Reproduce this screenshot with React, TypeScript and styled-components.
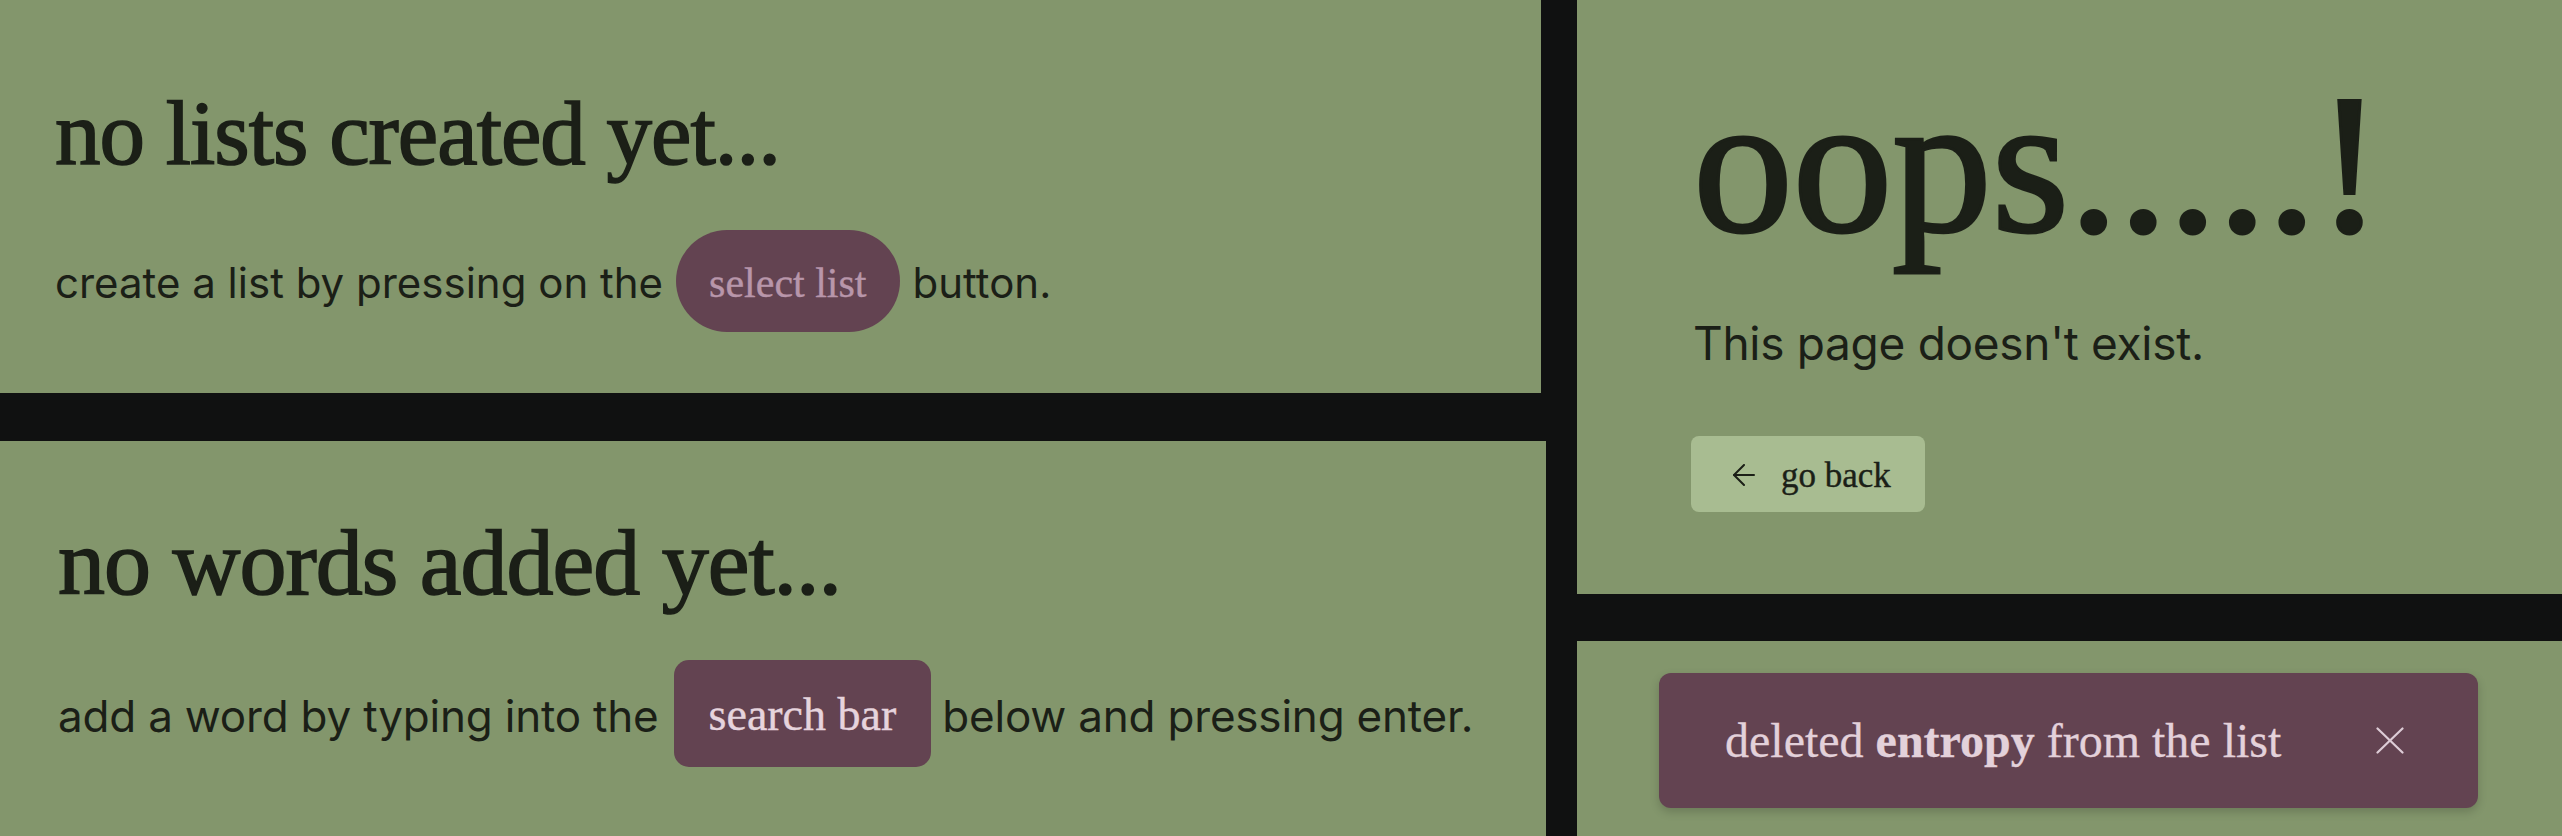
import React from "react";
import styled, { createGlobalStyle } from "styled-components";

const serif = `"Liberation Serif", "DejaVu Serif", serif`;
const sans = `"Inter", "Noto Sans", "Liberation Sans", sans-serif`;

const GlobalStyle = createGlobalStyle`
  html, body {
    margin: 0;
    padding: 0;
    background: #101111;
  }
  #root {
    width: 2562px;
    height: 836px;
    overflow: hidden;
  }
`;

const Board = styled.div`
  display: flex;
  width: 2562px;
  height: 836px;
  background: #101111;
  overflow: hidden;
`;

const LeftColumn = styled.div`
  display: flex;
  flex-direction: column;
  gap: 48px;
  width: 1546px;
  flex: none;
`;

const RightColumn = styled.div`
  display: flex;
  flex-direction: column;
  gap: 47px;
  margin-left: 31px;
  flex: 1;
  min-width: 0;
`;

const Panel = styled.section<{ $w?: string; $h: number; $pt: number; $pl: number }>`
  box-sizing: border-box;
  width: ${(p) => p.$w ?? "100%"};
  height: ${(p) => p.$h}px;
  flex: none;
  background: #83966c;
  padding: ${(p) => p.$pt}px 0 0 ${(p) => p.$pl}px;
  display: flex;
  flex-direction: column;
  align-items: flex-start;
  color: #1b1f17;
`;

const Heading = styled.h1<{ $size: number; $mb: number }>`
  margin: 0 0 ${(p) => p.$mb}px;
  font-family: ${serif};
  font-weight: 400;
  font-size: ${(p) => p.$size}px;
  line-height: 1;
  letter-spacing: -1px;
  -webkit-text-stroke: 1.6px #1b1f17;
  white-space: nowrap;
`;

const Hint = styled.div<{ $size: number; $h: number; $ls?: number }>`
  display: flex;
  align-items: center;
  height: ${(p) => p.$h}px;
  font-family: ${sans};
  font-size: ${(p) => p.$size}px;
  letter-spacing: ${(p) => p.$ls ?? 0}px;
  line-height: 1;
  padding-top: 4px;
  white-space: pre;
`;

const Chip = styled.span<{ $pill?: boolean; $h: number; $size: number; $fg: string; $ml: number; $mr: number }>`
  display: inline-flex;
  align-items: center;
  box-sizing: border-box;
  height: ${(p) => p.$h}px;
  margin: -4px ${(p) => p.$mr}px 0 ${(p) => p.$ml}px;
  padding: 3px ${(p) => (p.$pill ? 33 : 35)}px 0;
  border-radius: ${(p) => (p.$pill ? `${p.$h / 2}px` : "15px")};
  background: #634351;
  color: ${(p) => p.$fg};
  font-family: ${serif};
  font-size: ${(p) => p.$size}px;
  letter-spacing: 0;
  line-height: 1;
  -webkit-text-stroke: 0.4px ${(p) => p.$fg};
`;

const Oops = styled.h1`
  margin: 0 0 56px;
  font-family: ${serif};
  font-weight: 400;
  font-size: 200px;
  line-height: 1;
  letter-spacing: -0.5px;
  -webkit-text-stroke: 3px #1b1f17;
  white-space: nowrap;
`;

const Message = styled.p`
  margin: 0 0 70px;
  font-family: ${sans};
  font-size: 46px;
  line-height: 1;
  letter-spacing: -0.3px;
  white-space: nowrap;
`;

const BackButton = styled.button`
  display: flex;
  align-items: center;
  gap: 26px;
  box-sizing: border-box;
  height: 76px;
  width: 234px;
  padding: 2px 0 0 42px;
  margin-left: -2px;
  border: none;
  border-radius: 8px;
  background: #a8bc91;
  color: #1b1f17;
  font-family: ${serif};
  font-size: 35px;
  line-height: 1;
  -webkit-text-stroke: 0.4px #1b1f17;
  cursor: pointer;
`;

const Toast = styled.div`
  box-sizing: border-box;
  display: flex;
  align-items: center;
  justify-content: space-between;
  width: 819px;
  height: 135px;
  margin: 32px 0 0 82px;
  padding: 0 74px 0 66px;
  border-radius: 12px;
  background: #634351;
  box-shadow: 0 4px 10px rgba(0, 0, 0, 0.18);
  color: #e3d1da;
  font-family: ${serif};
  font-size: 48px;
  line-height: 1;
  -webkit-text-stroke: 0.3px #e3d1da;
  white-space: pre;
`;

const Close = styled.button`
  display: flex;
  padding: 0;
  border: none;
  background: transparent;
  color: #ddccd6;
  cursor: pointer;
`;

const ArrowLeft = () => (
  <svg width="22" height="22" viewBox="0 0 22 22" fill="none" stroke="currentColor" strokeWidth="2" strokeLinecap="round" strokeLinejoin="round">
    <path d="M21 11H1" />
    <path d="M11 1 1 11l10 10" />
  </svg>
);

const CloseIcon = () => (
  <svg width="28" height="27" viewBox="0 0 28 27" fill="none" stroke="currentColor" strokeWidth="2.2" strokeLinecap="round">
    <path d="M1.5 1.5 26.5 25.5" />
    <path d="M26.5 1.5 1.5 25.5" />
  </svg>
);

export default function App() {
  return (
    <>
      <GlobalStyle />
      <Board>
        <LeftColumn>
          <Panel $w="1541px" $h={393} $pt={88} $pl={55}>
            <Heading $size={91} $mb={49}>no lists created yet...</Heading>
            <Hint $size={42} $h={102}>
              create a list by pressing on the
              <Chip $pill $h={102} $size={42} $fg="#b896aa" $ml={13} $mr={13}>select list</Chip>
              button.
            </Hint>
          </Panel>
          <Panel $h={395} $pt={74} $pl={58}>
            <Heading $size={94} $mb={49}>no words added yet...</Heading>
            <Hint $size={44} $h={107} $ls={-0.2}>
              add a word by typing into the
              <Chip $h={107} $size={46} $fg="#e6d4dd" $ml={15} $mr={11}>search bar</Chip>
              below and pressing enter.
            </Hint>
          </Panel>
        </LeftColumn>
        <RightColumn>
          <Panel $h={594} $pt={64} $pl={116}>
            <Oops>oops.....!</Oops>
            <Message>This page doesn't exist.</Message>
            <BackButton>
              <ArrowLeft />
              go back
            </BackButton>
          </Panel>
          <Panel $h={195} $pt={0} $pl={0}>
            <Toast>
              <span>
                deleted <b>entropy</b> from the list
              </span>
              <Close aria-label="dismiss">
                <CloseIcon />
              </Close>
            </Toast>
          </Panel>
        </RightColumn>
      </Board>
    </>
  );
}
